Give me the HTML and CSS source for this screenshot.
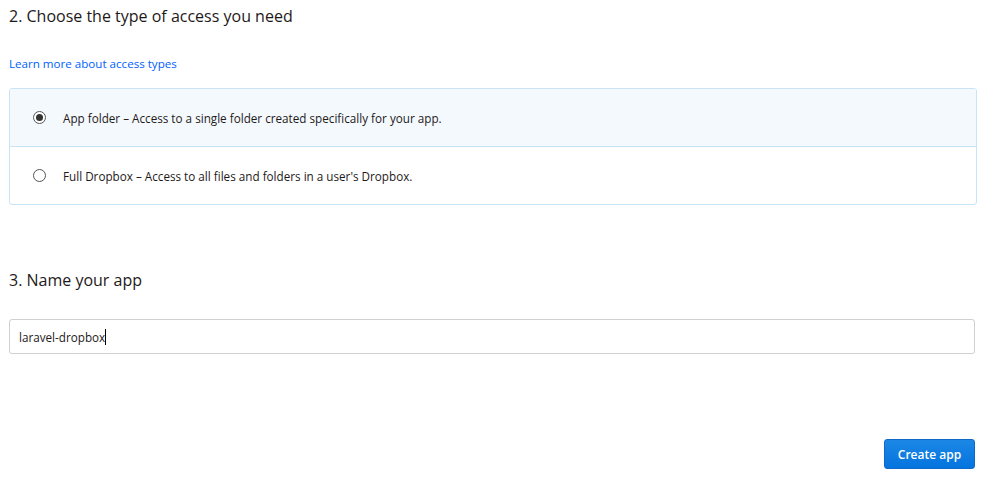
FILE: index.html
```html
<!DOCTYPE html>
<html>
<head>
<meta charset="utf-8">
<link rel="stylesheet" href="styles.css">
</head>
<body>
<div class="page">
  <section class="step">
    <h2 class="step-title">2. Choose the type of access you need</h2>
    <a class="learn" href="#">Learn more about access types</a>
    <div class="options">
      <label class="option selected">
        <span class="radio checked"></span>
        <span class="opt-text">App folder – Access to a single folder created specifically for your app.</span>
      </label>
      <label class="option">
        <span class="radio"></span>
        <span class="opt-text">Full Dropbox – Access to all files and folders in a user's Dropbox.</span>
      </label>
    </div>
  </section>
  <section class="step step-name">
    <h2 class="step-title">3. Name your app</h2>
    <div class="input"><span class="input-text">laravel-dropbox</span><span class="caret"></span></div>
  </section>
  <div class="actions">
    <button class="btn">Create app</button>
  </div>
</div>
</body>
</html>
```
FILE: styles.css
```css
html, body { margin: 0; padding: 0; background: #fff; }
body { font-family: "Open Sans", sans-serif; color: #1e1919; }
.page { padding: 0 24px 0 9px; }
.step-title { margin: 0; font-size: 16px; font-weight: 400; line-height: 20px; padding-top: 6px; color: #1e1919; }
.learn { display: block; margin-top: 30px; font-size: 11.6px; line-height: 16px; color: #0061fe; text-decoration: none; }
.options { margin-top: 16px; margin-right: -2px; border: 1px solid #c9e4f7; border-radius: 3px; overflow: hidden; }
.option { display: flex; align-items: center; height: 57px; padding-left: 23px; font-size: 11.7px; color: #1e1919; }
.option + .option { border-top: 1px solid #c9e4f7; }
.option.selected { background: #f4f9fe; }
.radio { width: 11px; height: 11px; border: 1px solid #555; border-radius: 50%; box-sizing: content-box; background: #fff; display: flex; align-items: center; justify-content: center; margin-right: 17px; }
.radio.checked::after { content: ""; width: 7px; height: 7px; border-radius: 50%; background: #333; }
.step-name { margin-top: 59px; }
.input { margin-top: 29px; height: 33px; border: 1px solid #d0d0d0; border-radius: 3px; display: flex; align-items: center; padding-left: 9px; font-size: 11.7px; color: #1e1919; }
.caret { width: 1px; height: 16px; background: #000; }
.actions { display: flex; justify-content: flex-end; margin-top: 85px; }
.btn { width: 91px; height: 30px; border: 1px solid #0e69c8; border-radius: 3px; background: linear-gradient(#1c87e5, #0474de); color: #fff; font-family: "Open Sans", sans-serif; font-size: 12px; font-weight: 600; padding: 0; }
```
